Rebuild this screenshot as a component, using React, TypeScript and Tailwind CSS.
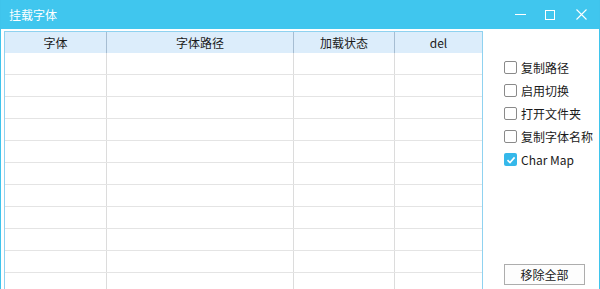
const columns = [
  { title: "字体", width: "w-[102px]" },
  { title: "字体路径", width: "w-[187px]" },
  { title: "加载状态", width: "w-[101px]" },
  { title: "del", width: "flex-1" },
];

const options = [
  { label: "复制路径", checked: false },
  { label: "启用切换", checked: false },
  { label: "打开文件夹", checked: false },
  { label: "复制字体名称", checked: false },
  { label: "Char Map", checked: true },
];

const rows = Array.from({ length: 11 });

function CheckBox({ checked }: { checked: boolean }) {
  if (checked) {
    return (
      <span className="w-[13px] h-[13px] rounded-[2px] bg-[#35b8ea] flex items-center justify-center">
        <svg width="10" height="10" viewBox="0 0 10 10">
          <path d="M1.5 5.2 L4 7.6 L8.6 2.4" fill="none" stroke="white" strokeWidth="1.6" />
        </svg>
      </span>
    );
  }
  return <span className="w-[13px] h-[13px] rounded-[2px] border border-[#8a8a8a] bg-white" />;
}

export default function App() {
  return (
    <div
      className="w-[600px] h-[289px] overflow-hidden flex flex-col bg-white border-x border-[#3fc4ec] text-[12px] text-[#1a1a1a]"
      style={{ fontFamily: '"Noto Sans CJK SC", "Noto Sans", sans-serif' }}
    >
      {/* title bar */}
      <div className="h-[29px] shrink-0 bg-[#40c6ee] flex items-center text-white">
        <span className="pl-[8px] flex-1 text-[12px]">挂载字体</span>
        <div className="flex items-center h-full">
          <div className="w-[30px] h-full flex items-center justify-center">
            <span className="w-[11px] h-px bg-white" />
          </div>
          <div className="w-[30px] h-full flex items-center justify-center">
            <span className="w-[10px] h-[10px] border border-white" />
          </div>
          <div className="w-[34px] h-full flex items-center justify-center pr-[2px]">
            <svg width="11" height="11" viewBox="0 0 11 11">
              <path d="M0.5 0.5 L10.5 10.5 M10.5 0.5 L0.5 10.5" stroke="white" strokeWidth="1.1" />
            </svg>
          </div>
        </div>
      </div>

      <div className="flex flex-1 min-h-0 overflow-hidden pt-[2px] pl-[3px]">
        {/* table */}
        <div className="w-[479px] overflow-hidden border border-[#8fd2f0] border-b-0 flex flex-col">
          <div className="h-[21px] shrink-0 bg-[#dcedfb] flex">
            {columns.map((c, i) => (
              <div
                key={c.title}
                className={`${c.width} flex items-center justify-center ${i < columns.length - 1 ? "border-r border-[#a6bdd2]" : ""}`}
              >
                {c.title}
              </div>
            ))}
          </div>
          {rows.map((_, r) => (
            <div key={r} className="h-[22px] shrink-0 flex border-b border-[#e4e4e4]">
              {columns.map((c, i) => (
                <div
                  key={c.title}
                  className={`${c.width} ${i < columns.length - 1 ? "border-r border-[#dcdcdc]" : ""}`}
                />
              ))}
            </div>
          ))}
        </div>

        {/* right panel */}
        <div className="flex-1 flex flex-col pl-[21px] pt-[30px] pb-[4px]">
          <div className="flex flex-col gap-[10px]">
            {options.map((o) => (
              <div key={o.label} className="flex items-center gap-[4px] h-[13px]">
                <CheckBox checked={o.checked} />
                <span className="leading-none">{o.label}</span>
              </div>
            ))}
          </div>
          <div className="flex-1" />
          <button className="w-[81px] h-[21px] border border-[#adadad] bg-[#fdfdfd] flex items-center justify-center text-[12px]">
            移除全部
          </button>
        </div>
      </div>
    </div>
  );
}
